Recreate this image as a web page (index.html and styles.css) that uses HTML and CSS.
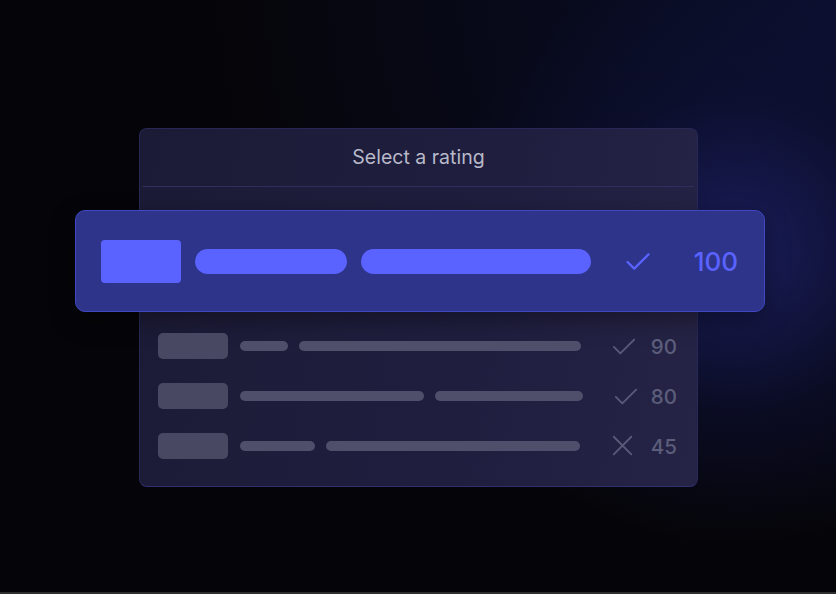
FILE: index.html
```html
<!DOCTYPE html>
<html lang="en">
<head>
    <meta charset="UTF-8">
    <meta name="viewport" content="width=device-width, initial-scale=1.0">
    <title>Select a rating</title>
    <link rel="stylesheet" href="styles.css">
</head>
<body>
    <div class="stage">
        <div class="panel">
            <div class="panel-title">Select a rating</div>
            <div class="divider"></div>

            <!-- Selected option -->
            <div class="option selected">
                <span class="thumb"></span>
                <span class="bar" style="width: 152px"></span>
                <span class="bar" style="width: 230px"></span>
                <svg class="mark" viewBox="0 0 26 20" width="26" height="20">
                    <path d="M2 10.5 L9 17.5 L24 2.5" />
                </svg>
                <span class="score">100</span>
            </div>

            <div class="options">
                <div class="option">
                    <span class="thumb"></span>
                    <span class="bar" style="width: 48px"></span>
                    <span class="bar" style="width: 282px"></span>
                    <svg class="mark" viewBox="0 0 26 20" width="26" height="20">
                        <path d="M2 10.5 L9 17.5 L24 2.5" />
                    </svg>
                    <span class="score">90</span>
                </div>
                <div class="option">
                    <span class="thumb"></span>
                    <span class="bar" style="width: 184px"></span>
                    <span class="bar" style="width: 148px"></span>
                    <svg class="mark" viewBox="0 0 26 20" width="26" height="20">
                        <path d="M2 10.5 L9 17.5 L24 2.5" />
                    </svg>
                    <span class="score">80</span>
                </div>
                <div class="option">
                    <span class="thumb"></span>
                    <span class="bar" style="width: 75px"></span>
                    <span class="bar" style="width: 254px"></span>
                    <svg class="mark cross" viewBox="0 0 26 26" width="26" height="26">
                        <path d="M3 3 L22 22 M22 3 L3 22" />
                    </svg>
                    <span class="score">45</span>
                </div>
            </div>
        </div>
    </div>
</body>
</html>
```

FILE: styles.css
```css
/* General Styles */
body {
    margin: 0;
    font-family: Inter, 'Noto Sans', sans-serif;
    background: #050509;
}

.stage {
    box-sizing: border-box;
    height: 594px;
    padding: 128px 0 0 139px;
    border-bottom: 2px solid #2e2e2e;
    background:
        radial-gradient(ellipse 300px 290px at 735px 255px, rgba(34, 38, 118, 0.7), rgba(16, 19, 62, 0.4) 55%, rgba(8, 10, 30, 0) 100%),
        radial-gradient(ellipse 620px 520px at 836px 0px, #0c0f2e 0%, #080a1c 45%, #050509 100%);
    background-color: #050509;
}

/* Panel */
.panel {
    box-sizing: border-box;
    width: 559px;
    height: 359px;
    background: linear-gradient(100deg, #1c1b36 0%, #1f1e3f 60%, #262446 100%);
    border: 1px solid #272856;
    border-bottom-color: #2e3070;
    border-radius: 8px;
}

.panel-title {
    height: 57px;
    line-height: 57px;
    text-align: center;
    font-size: 19.5px;
    color: #b8b9c9;
}

.divider {
    height: 1px;
    margin: 0 3px;
    background: #2d2f5e;
}

/* Options */
.option {
    display: flex;
    align-items: center;
}

.option .thumb {
    width: 70px;
    height: 26px;
    border-radius: 5px;
    background: #484862;
    margin-right: 12px;
}

.option .bar {
    height: 10px;
    border-radius: 5px;
    background: #4f4f6c;
    margin-right: 11px;
}

.option .mark {
    fill: none;
    stroke: #585a78;
    stroke-width: 2;
    stroke-linecap: round;
    stroke-linejoin: round;
    margin-left: 20px;
    width: 24px;
    height: 19px;
}

.option .mark.cross {
    width: 24px;
    height: 24px;
}

.option .score {
    margin-left: auto;
    font-size: 20.5px;
    font-weight: 500;
    color: #5b5d7b;
}

.options {
    display: flex;
    flex-direction: column;
    gap: 24px;
    padding: 21px 20px 0 18px;
}

/* Selected option */
.option.selected {
    box-sizing: border-box;
    height: 102px;
    margin: 23px -68px 0 -65px;
    padding: 0 26px 0 25px;
    background: #2e348a;
    border: 1px solid #3f47c2;
    border-radius: 10px;
    box-shadow: 0 8px 24px rgba(0, 0, 0, 0.35);
}

.option.selected .thumb {
    width: 80px;
    height: 43px;
    border-radius: 4px;
    background: #5a63ff;
    margin-right: 14px;
}

.option.selected .bar {
    height: 25px;
    border-radius: 12.5px;
    background: #5a63ff;
    margin-right: 14px;
}

.option.selected .mark {
    stroke: #5a63ff;
    stroke-width: 2.4;
    margin-left: 20px;
    width: 26px;
    height: 19px;
}

.option.selected .score {
    font-size: 26px;
    font-weight: 500;
    color: #5a63ff;
}
```
